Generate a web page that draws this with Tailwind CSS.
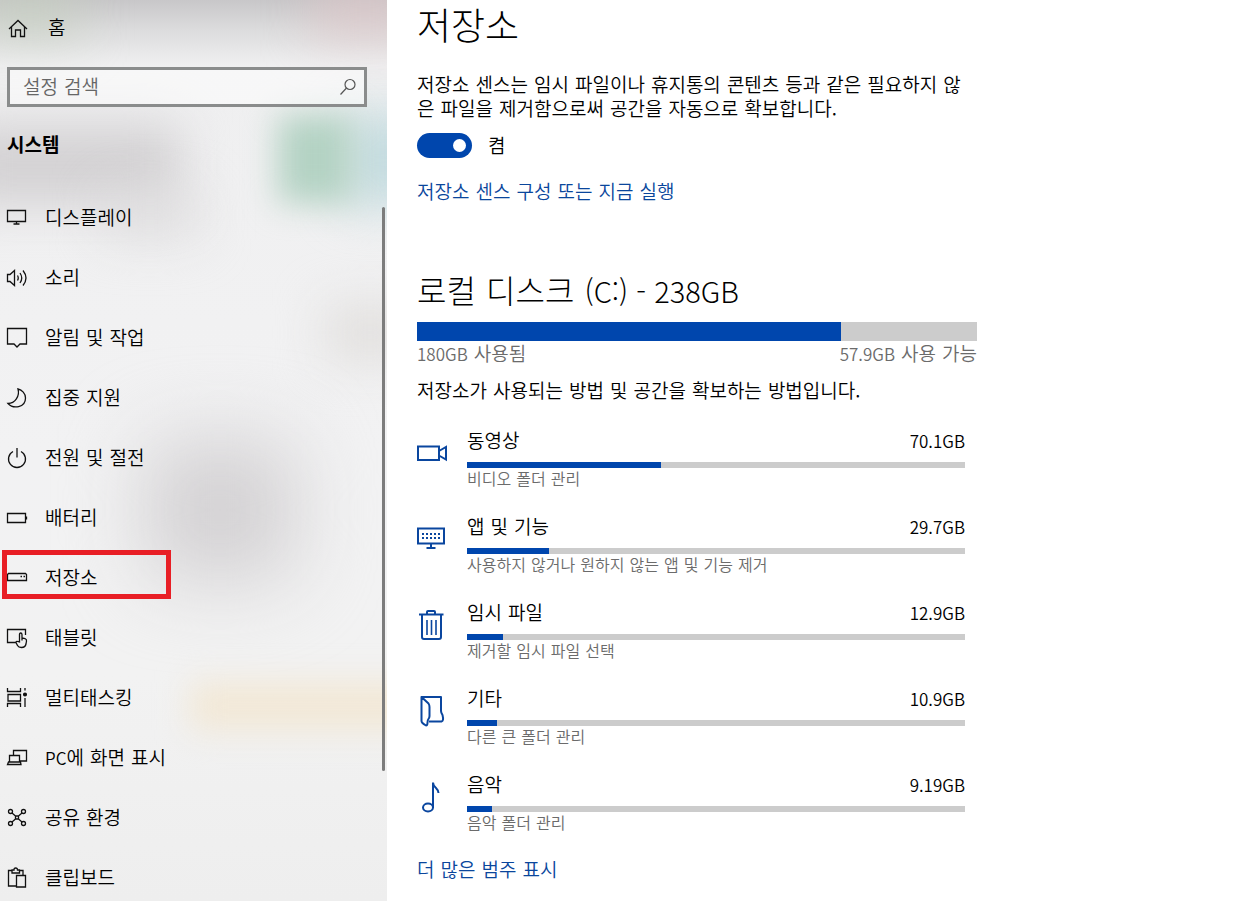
<!DOCTYPE html>
<html lang="ko">
<head>
<meta charset="utf-8">
<title>저장소</title>
<script src="https://cdn.jsdelivr.net/npm/@tailwindcss/browser@4"></script>
</head>
<body class="flex h-screen overflow-hidden bg-white font-['DejaVu_Sans','Noto_Sans_CJK_KR',sans-serif] text-[19px] leading-6 font-[350] text-black">

<aside class="relative isolate w-[387px] shrink-0 overflow-hidden bg-[linear-gradient(#c8c7c9,#dcdcdd_30px,#efeff0_65px,#f2f2f3_50%,#f2f2f2_75%,#eeeeee)]">
  <!-- Soft colour patches behind the translucent pane -->
  <div class="absolute inset-0 -z-10" aria-hidden="true">
    <div class="absolute -top-5 left-[310px] h-[60px] w-[110px] bg-[#e0c4c6]/60 blur-xl"></div>
    <div class="absolute -top-5 -left-5 h-[60px] w-[100px] bg-[#c3cfbd]/60 blur-xl"></div>
    <div class="absolute top-[125px] -left-10 h-[80px] w-[220px] bg-[#d3d1d3] blur-xl"></div>
    <div class="absolute top-[190px] left-[100px] h-[50px] w-[100px] bg-[#dddcdd]/70 blur-xl"></div>
    <div class="absolute top-[115px] left-[345px] h-[90px] w-[80px] bg-[#c2dbdf] blur-xl"></div>
    <div class="absolute top-[115px] left-[278px] h-[88px] w-[75px] bg-[#b3d2c3] blur-lg"></div>
    <div class="absolute top-[305px] left-[325px] h-[55px] w-[90px] bg-[#e1dfdd] blur-xl"></div>
    <div class="absolute top-[440px] left-[145px] h-[140px] w-[150px] rounded-3xl bg-[#d3d1d3] blur-2xl"></div>
    <div class="absolute top-[682px] left-[190px] h-[48px] w-[230px] bg-[#f2e8d6] blur-lg"></div>
  </div>
  <a href="#" class="flex h-14 items-center gap-[18px] pl-[6px]">
    <svg class="size-6" viewBox="0 0 24 24" fill="none" stroke="#111" stroke-width="1.3"><path d="M3 13 12 4.500l9 8.500M5.500 11v9.500h4V14h5v6.500h4V11"/></svg>
    <span>홈</span>
  </a>
  <label class="mt-[11px] ml-[7px] flex h-10 w-[360px] items-center border-3 border-[#8a8c8c] bg-white/50 pr-[6px] pl-[13px]">
    <input type="search" aria-label="설정 검색" placeholder="설정 검색" class="min-w-0 flex-1 bg-transparent font-[350] outline-none placeholder:text-[#666]">
    <svg class="size-5" viewBox="0 0 20 20" fill="none" stroke="#555" stroke-width="1.2"><circle cx="12" cy="7.500" r="5"/><path d="M8.500 11 2.500 17.500"/></svg>
  </label>
  <h2 class="mt-[26px] pl-[7px] font-bold">시스템</h2>

  <nav class="mt-9 flex flex-col gap-3">
    <a href="#" class="flex h-12 items-center gap-4 pl-[5px]">
      <svg class="size-6" viewBox="0 0 24 24" fill="none" stroke="#111" stroke-width="1.3"><path d="M2.500 5.500h18v11h-18zM11.500 16.500v2.500M8.500 19h6"/></svg><span class="pt-[2px]">디스플레이</span></a>
    <a href="#" class="flex h-12 items-center gap-4 pl-[5px]">
      <svg class="size-6" viewBox="0 0 24 24" fill="none" stroke="#111" stroke-width="1.3"><path d="M2.500 9.500H5l4.500-4v15L5 16.500H2.500zM12.500 10.500q1.500 2.500 0 5M15 8q3.500 5 0 10M18 5.500q6 7.500 0 15"/></svg><span class="pt-[2px]">소리</span></a>
    <a href="#" class="flex h-12 items-center gap-4 pl-[5px]">
      <svg class="size-6" viewBox="0 0 24 24" fill="none" stroke="#111" stroke-width="1.300"><path d="M2.500 3.500h19V19H15l-3 3-3-3H2.500z"/></svg><span class="pt-[2px]">알림 및 작업</span></a>
    <a href="#" class="flex h-12 items-center gap-4 pl-[5px]">
      <svg class="size-6" viewBox="0 0 24 24" fill="none" stroke="#111" stroke-width="1.3"><path d="M13 4C15 11 10 18.500 3 18.500 8 24 20.500 23 20.500 13 20.500 8.500 17 5 13 4z"/></svg><span class="pt-[2px]">집중 지원</span></a>
    <a href="#" class="flex h-12 items-center gap-4 pl-[5px]">
      <svg class="size-6" viewBox="0 0 24 24" fill="none" stroke="#111" stroke-width="1.3"><path d="M12 3v9.500M8 6.500a8.500 8.500 0 1 0 8 0"/></svg><span class="pt-[2px]">전원 및 절전</span></a>
    <a href="#" class="flex h-12 items-center gap-4 pl-[5px]">
      <svg class="size-6" viewBox="0 0 24 24" fill="none" stroke="#111" stroke-width="1.3"><path d="M2.500 8.500h18v9h-18zM21.500 11.500v3"/></svg><span class="pt-[2px]">배터리</span></a>
    <a href="#" aria-current="page" class="relative flex h-12 items-center gap-4 pl-[5px]">
      <svg class="size-6" viewBox="0 0 24 24" fill="none" stroke="#111" stroke-width="1.3"><path d="M3.500 8.500h17l1 1v6h-19v-6zM15.500 11.500h1.500M18.500 11.500H20"/></svg><span class="pt-[2px]">저장소</span>
      <span class="absolute -top-[3px] left-[2px] h-[49px] w-[169px] border-5 border-[#e81e25]"></span></a>
    <a href="#" class="flex h-12 items-center gap-4 pl-[5px]">
      <svg class="size-6" viewBox="0 0 24 24" fill="none" stroke="#111" stroke-width="1.3"><path d="M11 17.500H2.500v-13h18V10M14.500 17V9.500q0-1.500 1.200-1.500t1.300 1.500V13l3 .7q1.800.6 1.500 2.300l-.5 3q-.7 3.500-4.500 3.500-3 0-4-2l-1.500-3q0-1.500 1.500-1zM17 13v2.500"/></svg><span class="pt-[2px]">태블릿</span></a>
    <a href="#" class="flex h-12 items-center gap-4 pl-[5px]">
      <svg class="size-6" viewBox="0 0 24 24" fill="none" stroke="#111" stroke-width="1.3"><path d="M2.500 3v3.500h13V3M3 9.500h12.500v6.500H3zM2.500 22v-3.500h13V22M20 3v2.500M20 13v9"/><circle cx="20" cy="9.500" r="1.400" fill="#111"/></svg><span class="pt-[2px]">멀티태스킹</span></a>
    <a href="#" class="flex h-12 items-center gap-4 pl-[5px]">
      <svg class="size-6" viewBox="0 0 24 24" fill="none" stroke="#111" stroke-width="1.3"><path d="M8.500 10.500V5.500h13v10.500h-7M4.500 17v-6.500h10V17M3.500 17h12l.5 2.500H2.500z"/></svg><span class="pt-[2px]"><span class="font-['Noto_Sans_CJK_KR',sans-serif] text-[17px] leading-none">PC</span>에 화면 표시</span></a>
    <a href="#" class="flex h-12 items-center gap-4 pl-[5px]">
      <svg class="size-6" viewBox="0 0 24 24" fill="none" stroke="#111" stroke-width="1.3"><circle cx="5.500" cy="6.500" r="2"/><circle cx="18.500" cy="6.500" r="2"/><circle cx="5.500" cy="18.500" r="2"/><circle cx="18.500" cy="18.500" r="2"/><path d="M7 8l3.500 3M17 8l-3.500 3M7 17l3.500-3M17 17l-3.500-3M10.500 11h3v3h-3z"/></svg><span class="pt-[2px]">공유 환경</span></a>
    <a href="#" class="flex h-12 items-center gap-4 pl-[5px]">
      <svg class="size-6" viewBox="0 0 24 24" fill="none" stroke="#111" stroke-width="1.3"><path d="M7 5.500H3.500v15.500h8M14.500 5.500H18V10M7 5v3h7.500V5h-2q0-2-1.800-2T9 5zM11.500 10.500h9v11.500h-9z"/></svg><span class="pt-[2px]">클립보드</span></a>
  </nav>
  <div class="absolute top-[207px] right-[2px] h-[564px] w-[3px] rounded-full bg-[#7c7c7c]"></div>
</aside>

<main class="min-w-0 flex-1 pt-1 pl-[30px]">
  <h1 class="text-[37px] leading-[48px] font-light">저장소</h1>
  <p class="mt-[21px] max-w-[550px] break-all">저장소 센스는 임시 파일이나 휴지통의 콘텐츠 등과 같은 필요하지 않은 파일을 제거함으로써 공간을 자동으로 확보합니다<span class="font-['Noto_Sans_CJK_KR',sans-serif] leading-none">.</span></p>
  <div class="mt-3 flex h-[25px] items-center gap-4">
    <button type="button" role="switch" aria-checked="true" aria-labelledby="sense-state" class="flex h-[25px] w-[55px] items-center justify-end rounded-full bg-[#0046ad] pr-[6px]"><span class="size-[13px] rounded-full bg-white"></span></button>
    <span id="sense-state">켬</span>
  </div>
  <a href="#" class="mt-[22px] block w-fit text-[#0a469c]">저장소 센스 구성 또는 지금 실행</a>

  <section class="max-w-[560px]">
    <h2 class="mt-[68px] text-[32px] leading-10 font-light">로컬 디스크 <span class="font-['Noto_Sans_CJK_KR',sans-serif] text-[29px] leading-none">(C:) - 238GB</span></h2>
    <div class="mt-[10px] h-[19px] bg-[#ccc]" role="progressbar" aria-label="사용된 공간" aria-valuenow="76"><div class="h-full bg-[#0046ad]" style="width:75.700%"></div></div>
    <div class="mt-px flex justify-between text-[#6b6b6b]">
      <span><span class="font-['Noto_Sans_CJK_KR',sans-serif] text-[17px] leading-none">180GB</span> 사용됨</span>
      <span><span class="font-['Noto_Sans_CJK_KR',sans-serif] text-[17px] leading-none">57.9GB</span> 사용 가능</span>
    </div>
    <p class="mt-[13px]">저장소가 사용되는 방법 및 공간을 확보하는 방법입니다<span class="font-['Noto_Sans_CJK_KR',sans-serif] leading-none">.</span></p>

    <ul class="mt-[26px] flex flex-col gap-[23px] pr-3">
      <li class="flex gap-[19px]">
        <svg class="mt-2 -ml-px size-8 shrink-0" viewBox="0 0 32 32" fill="none" stroke="#0a469f" stroke-width="2"><path d="M2 9.500h21v13.500H2zM23 14l7-4v12.500l-7-4"/></svg>
        <a href="#" class="block flex-1"><span class="flex justify-between"><span>동영상</span><span class="font-['Noto_Sans_CJK_KR',sans-serif] text-[17px]">70.1GB</span></span>
          <span class="mt-[9px] block h-[6px] bg-[#ccc]"><span class="block h-full bg-[#0046ad]" style="width:39%"></span></span>
          <span class="block text-base leading-6 text-[#6b6b6b]">비디오 폴더 관리</span></a>
      </li>
      <li class="flex gap-[19px]">
        <svg class="mt-2 -ml-px size-8 shrink-0" viewBox="0 0 32 32" fill="none" stroke="#0a469f" stroke-width="2"><path d="M2 5.500h26v15H2zM15 21v4M10.500 25h9"/><path stroke-dasharray="2 2" d="M6 11h18M6 15h18"/></svg>
        <a href="#" class="block flex-1"><span class="flex justify-between"><span>앱 및 기능</span><span class="font-['Noto_Sans_CJK_KR',sans-serif] text-[17px]">29.7GB</span></span>
          <span class="mt-[9px] block h-[6px] bg-[#ccc]"><span class="block h-full bg-[#0046ad]" style="width:16.500%"></span></span>
          <span class="block text-base leading-6 text-[#6b6b6b]">사용하지 않거나 원하지 않는 앱 및 기능 제거</span></a>
      </li>
      <li class="flex gap-[19px]">
        <svg class="mt-2 -ml-px size-8 shrink-0" viewBox="0 0 32 32" fill="none" stroke="#0a469f" stroke-width="2"><path d="M3 5.500h24.500M11 5.500V3q0-1 1-1h6q1 0 1 1v2.500M6 5.500V28q0 2 2 2h15q2 0 2-2V5.500"/><path stroke-width="1.600" d="M11 11v15M15.500 11v15M20 11v15"/></svg>
        <a href="#" class="block flex-1"><span class="flex justify-between"><span>임시 파일</span><span class="font-['Noto_Sans_CJK_KR',sans-serif] text-[17px]">12.9GB</span></span>
          <span class="mt-[9px] block h-[6px] bg-[#ccc]"><span class="block h-full bg-[#0046ad]" style="width:7.200%"></span></span>
          <span class="block text-base leading-6 text-[#6b6b6b]">제거할 임시 파일 선택</span></a>
      </li>
      <li class="flex gap-[19px]">
        <svg class="mt-2 -ml-px size-8 shrink-0" viewBox="0 0 32 32" fill="none" stroke="#0a469f" stroke-width="2" stroke-linejoin="round"><path d="M5.500 2H25v14q0 1.500 1.500 4 1.500 6-1 6.500H13M5.500 2v24q0 2 4.500 4.500 1.500 0 1.500-3 0-2.500 1.500-4.500.5-1 .5-2v-9q0-2-1-3.500L5.500 2z"/></svg>
        <a href="#" class="block flex-1"><span class="flex justify-between"><span>기타</span><span class="font-['Noto_Sans_CJK_KR',sans-serif] text-[17px]">10.9GB</span></span>
          <span class="mt-[9px] block h-[6px] bg-[#ccc]"><span class="block h-full bg-[#0046ad]" style="width:6%"></span></span>
          <span class="block text-base leading-6 text-[#6b6b6b]">다른 큰 폴더 관리</span></a>
      </li>
      <li class="flex gap-[19px]">
        <svg class="mt-2 -ml-px size-8 shrink-0" viewBox="0 0 32 32" fill="none" stroke="#0a469f" stroke-width="2"><ellipse cx="12" cy="26.500" rx="5" ry="4"/><path d="M17 27V1.500q0 3 3 5.500 2.500 2.500 2.500 5"/></svg>
        <a href="#" class="block flex-1"><span class="flex justify-between"><span>음악</span><span class="font-['Noto_Sans_CJK_KR',sans-serif] text-[17px]">9.19GB</span></span>
          <span class="mt-[9px] block h-[6px] bg-[#ccc]"><span class="block h-full bg-[#0046ad]" style="width:5%"></span></span>
          <span class="block text-base leading-6 text-[#6b6b6b]">음악 폴더 관리</span></a>
      </li>
    </ul>
    <a href="#" class="mt-[22px] block w-fit text-[#0a469c]">더 많은 범주 표시</a>
  </section>
</main>
</body>
</html>
